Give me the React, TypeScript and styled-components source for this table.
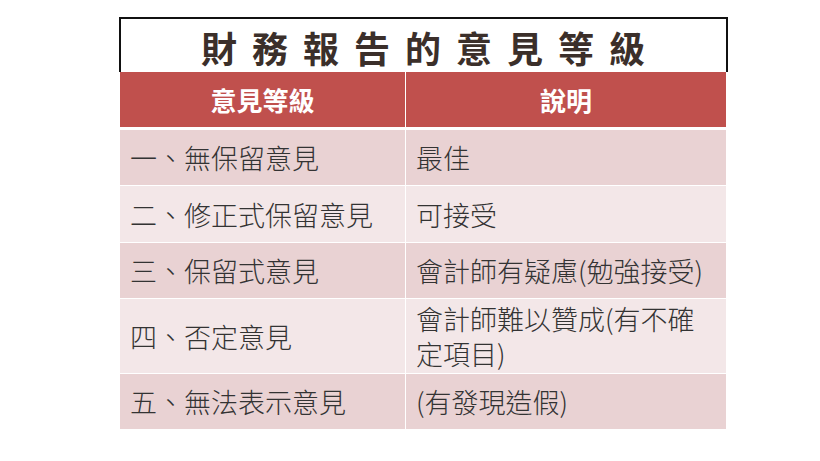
import React from "react";
import styled, { createGlobalStyle } from "styled-components";

const GlobalStyle = createGlobalStyle`
  html, body {
    margin: 0;
    padding: 0;
    background: #ffffff;
  }
  body {
    font-family: "Noto Sans CJK TC", "Noto Sans", sans-serif;
  }
`;

const Page = styled.div`
  width: 820px;
  height: 461px;
  box-sizing: border-box;
  padding: 17px 0 0 119px;
  background: #ffffff;
`;

const Slide = styled.div`
  width: 609px;
  display: flex;
  flex-direction: column;
`;

const TitleBox = styled.div`
  height: 55px;
  box-sizing: border-box;
  border: 2px solid #111111;
  border-bottom: none;
  display: flex;
  align-items: center;
  justify-content: center;
  padding: 2px 0 0 14px;
`;

const Title = styled.h1`
  margin: 0;
  font-family: "Noto Sans CJK TC", "Noto Sans", sans-serif;
  font-size: 36px;
  font-weight: 700;
  line-height: 1;
  letter-spacing: 15px;
  color: #3b2f2a;
`;

const Table = styled.div`
  width: 606px;
  margin-left: 1px;
  display: grid;
  grid-template-columns: 285px 320px;
  column-gap: 1px;
  row-gap: 1px;
  background: #ffffff;
`;

const HeaderCell = styled.div`
  height: 55px;
  margin-bottom: 2px;
  background: #c0504d;
  color: #ffffff;
  font-size: 26px;
  font-weight: 700;
  display: flex;
  align-items: center;
  justify-content: center;
  line-height: 1;
`;

const Cell = styled.div<{ $band: boolean; $tall?: boolean }>`
  min-height: ${(p) => (p.$tall ? 56 : 55)}px;
  box-sizing: border-box;
  padding: 2px 12px 2px 10px;
  background: ${(p) => (p.$band ? "#e9d2d3" : "#f3e7e8")};
  color: #333333;
  font-size: 27px;
  font-weight: 300;
  line-height: 35px;
  display: flex;
  align-items: center;
`;

const rows: { grade: string; desc: string; tall?: boolean }[] = [
  { grade: "一、無保留意見", desc: "最佳" },
  { grade: "二、修正式保留意見", desc: "可接受", tall: true },
  { grade: "三、保留式意見", desc: "會計師有疑慮(勉強接受)" },
  { grade: "四、否定意見", desc: "會計師難以贊成(有不確定項目)" },
  { grade: "五、無法表示意見", desc: "(有發現造假)" },
];

export default function App() {
  return (
    <>
      <GlobalStyle />
      <Page>
        <Slide>
          <TitleBox>
            <Title>財務報告的意見等級</Title>
          </TitleBox>
          <Table>
            <HeaderCell>意見等級</HeaderCell>
            <HeaderCell>說明</HeaderCell>
            {rows.map((r, i) => (
              <React.Fragment key={r.grade}>
                <Cell $band={i % 2 === 0} $tall={r.tall}>
                  {r.grade}
                </Cell>
                <Cell $band={i % 2 === 0} $tall={r.tall}>
                  {r.desc}
                </Cell>
              </React.Fragment>
            ))}
          </Table>
        </Slide>
      </Page>
    </>
  );
}
